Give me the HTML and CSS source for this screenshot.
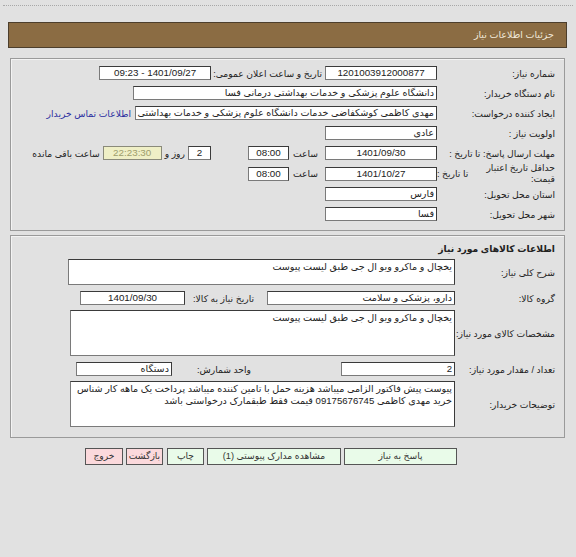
FILE: index.html
```html
<!DOCTYPE html>
<html lang="fa" dir="rtl">
<head>
<meta charset="utf-8">
<link rel="stylesheet" href="styles.css">
</head>
<body>
<div class="topline"></div>
<div class="header">جزئیات اطلاعات نیاز</div>

<div class="panel p1">
  <div class="row">
    <span class="lbl">شماره نیاز:</span>
    <span class="box w112 c">1201003912000877</span>
    <span class="lbl2">تاریخ و ساعت اعلان عمومی:</span>
    <span class="box w112 c">1401/09/27 - 09:23</span>
  </div>
  <div class="row">
    <span class="lbl">نام دستگاه خریدار:</span>
    <span class="box w304">دانشگاه علوم پزشکی و خدمات بهداشتی درمانی فسا</span>
  </div>
  <div class="row">
    <span class="lbl">ایجاد کننده درخواست:</span>
    <span class="box w302 clip"><span class="cliptext">مهدی  کاظمی کوشکفاضی خدمات دانشگاه علوم پزشکی و خدمات بهداشتی درمانی فسا</span></span>
    <a class="link">اطلاعات تماس خریدار</a>
  </div>
  <div class="row">
    <span class="lbl">اولویت نیاز :</span>
    <span class="box w112">عادی</span>
  </div>
  <div class="row">
    <span class="lbl">مهلت ارسال پاسخ: تا تاریخ :</span>
    <span class="box w112 c">1401/09/30</span>
    <span class="hour">ساعت</span>
    <span class="box w40 c">08:00</span>
    <span class="box w23 c days">2</span>
    <span class="txt">روز و</span>
    <span class="box w59 c remain">22:23:30</span>
    <span class="txt">ساعت باقی مانده</span>
  </div>
  <div class="row r6">
    <span class="lbl split"><span class="l6a">حداقل تاریخ اعتبار قیمت:</span><span class="l6b">تا تاریخ :</span></span>
    <span class="box w112 c">1401/10/27</span>
    <span class="hour">ساعت</span>
    <span class="box w40 c">08:00</span>
  </div>
  <div class="row">
    <span class="lbl">استان محل تحویل:</span>
    <span class="box w112">فارس</span>
  </div>
  <div class="row">
    <span class="lbl">شهر محل تحویل:</span>
    <span class="box w112">فسا</span>
  </div>
</div>

<div class="panel p2">
  <div class="title">اطلاعات کالاهای مورد نیاز</div>
  <div class="arow">
    <span class="lbl-b">شرح کلی نیاز:</span>
    <div class="area a1">یخچال و ماکرو ویو ال جی طبق لیست پیوست</div>
  </div>
  <div class="row2">
    <span class="lbl-b">گروه کالا:</span>
    <span class="box w188">دارو، پزشکی و سلامت</span>
    <span class="lbl-c">تاریخ نیاز به کالا:</span>
    <span class="box w105 c">1401/09/30</span>
  </div>
  <div class="arow a2row">
    <span class="lbl-b">مشخصات کالای مورد نیاز:</span>
    <div class="area a2">یخچال و ماکرو ویو ال جی طبق لیست پیوست</div>
  </div>
  <div class="row2 qty">
    <span class="lbl-b">تعداد / مقدار مورد نیاز:</span>
    <span class="box w114">2</span>
    <span class="lbl-d">واحد شمارش:</span>
    <span class="box w96">دستگاه</span>
  </div>
  <div class="arow a3row">
    <span class="lbl-b">توضیحات خریدار:</span>
    <div class="area a3">پیوست پیش فاکتور الزامی میباشد هزینه حمل با تامین کننده میباشد پرداخت یک ماهه کار شناس<br>خرید مهدی کاظمی 09175676745 قیمت فقط طبقمارک درخواستی باشد</div>
  </div>
</div>

<div class="buttons">
  <span class="btn green b1">پاسخ به نیاز</span>
  <span class="btn green b2">مشاهده مدارک پیوستی (1)</span>
  <span class="btn green b3">چاپ</span>
  <span class="btn pink b4">بازگشت</span>
  <span class="btn pink b5">خروج</span>
</div>
</body>
</html>
```
FILE: styles.css
```css
html, body {
  margin: 0;
  padding: 0;
}
body {
  background: #e1e1e1;
  font-family: "Liberation Sans", "DejaVu Sans", sans-serif;
  font-size: 9.2px;
  color: #222;
  width: 576px;
  height: 557px;
  overflow: hidden;
}
.topline {
  margin: 5px 3px 0 3px;
  border-top: 1px dotted #a8a8a8;
  height: 0;
}
.header {
  margin: 16px 9px 0 8px;
  height: 24px;
  line-height: 24px;
  background: #8b6c43;
  border: 1px solid #4c3e2c;
  color: #f1e9da;
  padding-right: 12px;
  font-size: 9.5px;
}
.panel {
  margin: 10px 11px 0 10px;
  border: 1px solid #9a9a9a;
  box-shadow: inset 1px 1px 0 #f3f3f3;
}
.p1 {
  padding: 4px 9px 6px 0;
}
.row {
  display: flex;
  align-items: center;
  height: 20px;
}
.r6 {
  height: 21px;
}
.lbl {
  width: 118px;
  flex: none;
  white-space: nowrap;
}
.split {
  display: flex;
  align-items: center;
}
.l6a {
  width: 76px;
  line-height: 11px;
  white-space: normal;
}
.l6b {
  margin-right: 12px;
}
.box {
  display: inline-block;
  box-sizing: border-box;
  height: 14px;
  line-height: 12px;
  background: #fff;
  border: 1px solid #7a7a7a;
  border-top-color: #3a3a3a;
  border-right-color: #3a3a3a;
  padding: 0 2px;
  white-space: nowrap;
  overflow: hidden;
  flex: none;
  font-size: 9.6px;
}
.clip {
  position: relative;
}
.cliptext {
  position: absolute;
  right: 2px;
  top: 0;
}
.c {
  text-align: center;
  font-size: 9.8px;
}
.w112 { width: 112px; }
.w304 { width: 304px; }
.w302 { width: 302px; }
.w40 { width: 41px; }
.w23 { width: 23px; }
.w59 { width: 59px; }
.w188 { width: 188px; }
.w105 { width: 105px; }
.w114 { width: 114px; }
.w96 { width: 96px; }
.lbl2 {
  margin-right: 3px;
  margin-left: 2px;
  white-space: nowrap;
}
.link {
  color: #2b2fa0;
  margin-right: 4px;
  white-space: nowrap;
}
.hour {
  margin-right: 7px;
  width: 29px;
}
.days {
  margin-right: 37px;
}
.txt {
  margin: 0 3px;
  white-space: nowrap;
}
.remain {
  background: #efefc6;
  color: #9d9d6b;
  border-color: #8a8a7a;
}
.p2 {
  margin-top: 4px;
  padding: 5px 9px 10px 0;
}
.title {
  height: 16px;
  line-height: 16px;
  font-weight: bold;
}
.arow {
  display: flex;
  align-items: center;
  margin-top: 2px;
}
.lbl-b {
  width: 100px;
  flex: none;
  white-space: nowrap;
}
.area {
  box-sizing: border-box;
  width: 387px;
  background: #fff;
  border: 1px solid #7a7a7a;
  border-top-color: #3a3a3a;
  border-right-color: #3a3a3a;
  padding: 1px 2px;
  line-height: 12px;
  overflow: hidden;
  white-space: nowrap;
  font-size: 9.6px;
}
.a1 { height: 26px; }
.a2 { height: 46px; width: 385px; }
.a3 { height: 46px; width: 385px; }
.a2row { margin-top: 3px; }
.a3row { margin-top: 2px; }
.row2 {
  display: flex;
  align-items: center;
  height: 18px;
  margin-top: 4px;
}
.qty {
  height: 20px;
  margin-top: 3px;
}
.lbl-c {
  margin-right: 13px;
  margin-left: 8px;
  white-space: nowrap;
}
.lbl-d {
  margin-right: 90px;
  margin-left: 25px;
  white-space: nowrap;
}
.buttons {
  display: flex;
  margin-top: 10px;
  padding-right: 119px;
  gap: 3px;
}
.btn {
  box-sizing: border-box;
  height: 17px;
  line-height: 15px;
  border: 1px solid #555;
  text-align: center;
  color: #333;
  white-space: nowrap;
}
.green { background: #e9fbe9; }
.pink { background: #fbd9dc; }
.b1 { width: 113px; }
.b2 { width: 134px; }
.b3 { width: 37px; margin-left: 1px; }
.b4 { width: 37px; }
.b5 { width: 38px; }
```
